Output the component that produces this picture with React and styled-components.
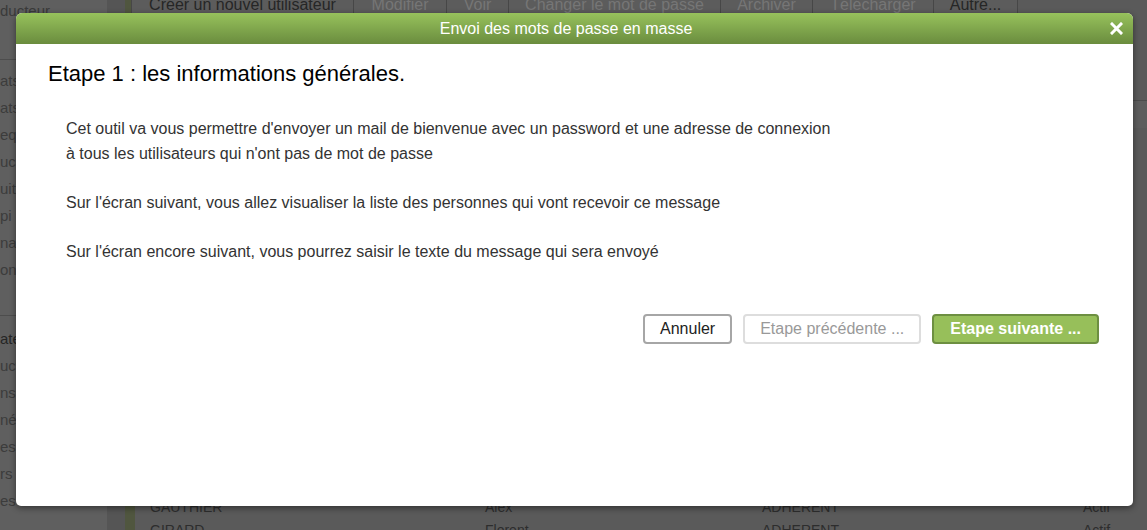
import React from 'react'
import styled, { createGlobalStyle } from 'styled-components'

const Global = createGlobalStyle`
html, body {
  margin: 0;
  padding: 0;
  width: 1147px;
  height: 530px;
  overflow: hidden;
  font-family: "Liberation Sans", Arial, sans-serif;
}
`;

const Page = styled.div`
position: relative;
display: flex;
width: 1147px;
height: 530px;
background: #5a5a5a;
overflow: hidden;
`;

const Sidebar = styled.div`
width: 107px;
flex: none;
background: #5f5f5f;
display: flex;
flex-direction: column;
`;

const SideHead = styled.div`
flex: none;
height: 59px;
border-bottom: 1px solid #4d4d4d;
font-size: 15px;
line-height: 22px;
color: #3a3a3a;
`;

const SideList = styled.div`
flex: none;
padding: ${p => p.last ? '9px 0 0' : '7px 0 32px'};
border-bottom: ${p => p.last ? 'none' : '1px solid #4d4d4d'};
`;

const SideItem = styled.div`
height: 27px;
line-height: 27px;
font-size: 15px;
color: ${p => p.active ? '#262626' : '#3c3c3c'};
white-space: nowrap;
`;

const Gutter = styled.div`
width: 18px;
flex: none;
background: #555555;
`;

const Main = styled.div`
flex: 1;
display: flex;
flex-direction: column;
border-left: 10px solid #50563f;
& > * {
  flex-shrink: 0;
}
`;

const Toolbar = styled.div`
height: 13px;
display: flex;
align-items: flex-end;
overflow: hidden;
border-left: 1px solid #474747;
margin-left: -4px;
`;

const ToolButton = styled.div`
flex: none;
box-sizing: border-box;
width: ${p => p.w}px;
height: 30px;
padding-top: 13px;
line-height: 17px;
font-size: 16px;
text-align: center;
color: ${p => p.disabled ? '#767676' : '#262626'};
background: #5c5c5c;
border-right: 1px solid #474747;
white-space: nowrap;
`;

const Filters = styled.div`
height: 87px;
`;

const TableHead = styled.div`
height: 27px;
border-top: 1px solid #4b4b4b;
background: #5d5d5d;
`;

const Row = styled.div`
display: grid;
grid-template-columns: 335px 277px 321px 1fr;
padding-left: 15px;
height: 23px;
line-height: 23px;
font-size: 14px;
color: #2d2d2d;
white-space: nowrap;
`;

const Modal = styled.div`
position: absolute;
left: 16px;
top: 13px;
width: 1117px;
height: 493px;
background: #ffffff;
border-radius: 6px 6px 5px 5px;
box-shadow: 0 2px 6px rgba(0, 0, 0, 0.45);
display: flex;
flex-direction: column;
overflow: hidden;
`;

const ModalHeader = styled.div`
position: relative;
height: 31px;
display: flex;
align-items: center;
justify-content: center;
padding-right: 17px;
background: linear-gradient(#97c25c, #6a8c3e);
color: #ffffff;
font-size: 16px;
`;

const Close = styled.div`
position: absolute;
right: 10px;
top: 9px;
width: 13px;
height: 13px;
display: flex;
`;

const ModalBody = styled.div`
flex: 1;
display: flex;
flex-direction: column;
padding: 17px 34px 0 32px;
`;

const StepTitle = styled.h2`
margin: 0;
font-size: 22px;
line-height: 26px;
font-weight: normal;
color: #000000;
`;

const Text = styled.div`
padding: 29px 0 0 18px;
`;

const Para = styled.p`
margin: 0 0 24px;
font-size: 16px;
line-height: 25px;
color: #333333;
`;

const Actions = styled.div`
display: flex;
justify-content: flex-end;
gap: 11px;
margin-top: 26px;
`;

const Button = styled.button`
height: 30px;
padding: 0 ${p => p.pad}px;
font-family: "Liberation Sans", Arial, sans-serif;
font-size: 16px;
font-weight: ${p => p.primary ? 'bold' : 'normal'};
color: ${p => p.primary ? '#ffffff' : p.disabled ? '#999999' : '#222222'};
background: ${p => p.primary ? '#97bf5a' : '#ffffff'};
border: 2px solid ${p => p.primary ? '#6d8f41' : p.disabled ? '#dddddd' : '#a6a6a6'};
border-radius: 4px;
`;

const sideTop = ['ats', 'ats', 'equ', 'ucte', 'uits', 'pi', 'nap', 'on'];
const sideBottom = ['ate', 'ucte', 'ns', 'nés', 'es', 'rs', 'es'];

const tools = [
  { label: 'Créer un nouvel utilisateur', w: 222 },
  { label: 'Modifier', w: 93, disabled: true },
  { label: 'Voir', w: 62, disabled: true },
  { label: 'Changer le mot de passe', w: 212, disabled: true },
  { label: 'Archiver', w: 92, disabled: true },
  { label: 'Télécharger', w: 121, disabled: true },
  { label: 'Autre...', w: 84 },
];

const rows = [
  ['BERNARD', 'Julie', 'ADHERENT', 'Actif'],
  ['BLANC', 'Marc', 'ADHERENT', 'Actif'],
  ['BONNET', 'Sophie', 'ADHERENT', 'Actif'],
  ['BOYER', 'Luc', 'ADHERENT', 'Actif'],
  ['CHEVALIER', 'Anne', 'ADHERENT', 'Actif'],
  ['CLEMENT', 'Paul', 'ADHERENT', 'Actif'],
  ['DAVID', 'Claire', 'ADHERENT', 'Actif'],
  ['DUBOIS', 'Pierre', 'ADHERENT', 'Actif'],
  ['DUPONT', 'Marie', 'ADHERENT', 'Actif'],
  ['DURAND', 'Jean', 'ADHERENT', 'Actif'],
  ['FAURE', 'Louise', 'ADHERENT', 'Actif'],
  ['FONTAINE', 'Hugo', 'ADHERENT', 'Actif'],
  ['FOURNIER', 'Emma', 'ADHERENT', 'Actif'],
  ['GARCIA', 'Thomas', 'ADHERENT', 'Actif'],
  ['GARNIER', 'Léa', 'ADHERENT', 'Actif'],
  ['GAUTIER', 'Nicolas', 'ADHERENT', 'Actif'],
  ['GAUTHIER', 'Alex', 'ADHERENT', 'Actif'],
  ['GIRARD', 'Florent', 'ADHERENT', 'Actif'],
];

const App = () => {
  return (
    <Page>
      <Global />
      <Sidebar>
        <SideHead>ducteur</SideHead>
        <SideList>
          {sideTop.map((s, i) => <SideItem key={i}>{s}</SideItem>)}
        </SideList>
        <SideList last>
          {sideBottom.map((s, i) => <SideItem key={i} active={i === 0}>{s}</SideItem>)}
        </SideList>
      </Sidebar>
      <Gutter />
      <Main>
        <Toolbar>
          {tools.map(t => (
            <ToolButton key={t.label} w={t.w} disabled={t.disabled}>{t.label}</ToolButton>
          ))}
        </Toolbar>
        <Filters />
        <TableHead />
        {rows.map((r, i) => (
          <Row key={i}>
            {r.map((c, j) => <span key={j}>{c}</span>)}
          </Row>
        ))}
      </Main>

      <Modal>
        <ModalHeader>
          Envoi des mots de passe en masse
          <Close>
            <svg width="13" height="13" viewBox="0 0 13 13">
              <path d="M2 2 L11 11 M11 2 L2 11" stroke="#ffffff" strokeWidth="3" strokeLinecap="square" />
            </svg>
          </Close>
        </ModalHeader>
        <ModalBody>
          <StepTitle>Etape 1 : les informations générales.</StepTitle>
          <Text>
            <Para>
              Cet outil va vous permettre d'envoyer un mail de bienvenue avec un password et une adresse de connexion
              <br />
              à tous les utilisateurs qui n'ont pas de mot de passe
            </Para>
            <Para>Sur l'écran suivant, vous allez visualiser la liste des personnes qui vont recevoir ce message</Para>
            <Para>Sur l'écran encore suivant, vous pourrez saisir le texte du message qui sera envoyé</Para>
          </Text>
          <Actions>
            <Button pad={15}>Annuler</Button>
            <Button disabled pad={15}>Etape précédente ...</Button>
            <Button primary pad={16}>Etape suivante ...</Button>
          </Actions>
        </ModalBody>
      </Modal>
    </Page>
  )
}

export default App
